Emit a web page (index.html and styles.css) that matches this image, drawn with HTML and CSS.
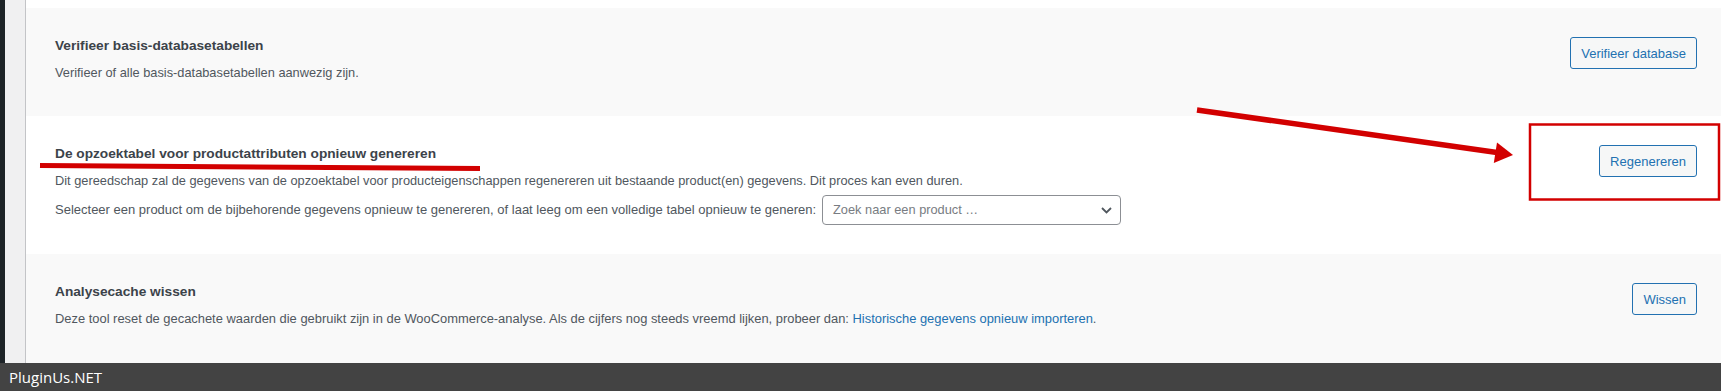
FILE: index.html
```html
<!DOCTYPE html>
<html lang="nl">
<head>
    <meta charset="UTF-8">
    <meta name="viewport" content="width=device-width, initial-scale=1.0">
    <title>Hulpmiddelen</title>
    <link rel="stylesheet" href="styles.css">
</head>
<body>
    <div class="page">
        <div class="menu-edge"></div>
        <div class="gutter"></div>

        <div class="tools-table">
            <div class="row-prev"></div>

            <!-- Verify base tables -->
            <div class="tool-row alt">
                <div class="tool-info">
                    <strong class="tool-title">Verifieer basis-databasetabellen</strong>
                    <p class="desc">Verifieer of alle basis-databasetabellen aanwezig zijn.</p>
                </div>
                <button class="button">Verifieer database</button>
            </div>

            <!-- Regenerate attributes lookup table -->
            <div class="tool-row wide">
                <div class="tool-info">
                    <strong class="tool-title">De opzoektabel voor productattributen opnieuw genereren</strong>
                    <p class="desc">Dit gereedschap zal de gegevens van de opzoektabel voor producteigenschappen regenereren uit bestaande product(en) gegevens. Dit proces kan even duren.</p>
                    <p class="desc select-line">Selecteer een product om de bijbehorende gegevens opnieuw te genereren, of laat leeg om een volledige tabel opnieuw te generen:<span class="product-select"><span class="placeholder">Zoek naar een product …</span><svg class="chevron" width="11" height="7" viewBox="0 0 11 7"><path d="M1 1l4.5 4.5L10 1" fill="none" stroke="#50575e" stroke-width="1.8"/></svg></span></p>
                </div>
                <button class="button">Regenereren</button>
            </div>

            <!-- Clear analytics cache -->
            <div class="tool-row alt last">
                <div class="tool-info">
                    <strong class="tool-title">Analysecache wissen</strong>
                    <p class="desc long">Deze tool reset de gecachete waarden die gebruikt zijn in de WooCommerce-analyse. Als de cijfers nog steeds vreemd lijken, probeer dan: <a href="#">Historische gegevens opnieuw importeren</a>.</p>
                </div>
                <button class="button">Wissen</button>
            </div>
        </div>
    </div>

    <div class="footer-bar">PluginUs.NET</div>

    <!-- hand drawn annotations over the screenshot -->
    <svg class="annotations" width="1721" height="391" viewBox="0 0 1721 391">
        <path d="M40 165.5 L480 168.5" stroke="#d20000" stroke-width="5" fill="none"/>
        <path d="M1197 110 L1497 152.5" stroke="#d20000" stroke-width="5.5" fill="none"/>
        <polygon points="1513,155 1493.8,163 1497,142.6" fill="#d20000"/>
        <rect x="1530" y="124.5" width="189" height="75" fill="none" stroke="#d20000" stroke-width="2.5"/>
    </svg>
</body>
</html>
```

FILE: styles.css
```css
body {
    margin: 0;
    width: 1721px;
    height: 391px;
    overflow: hidden;
    position: relative;
    font-family: "Liberation Sans", Arial, sans-serif;
    background-color: #f0f0f1;
}

.page {
    display: flex;
    height: 363px;
}

.menu-edge {
    width: 5px;
    background-color: #1d2327;
}

.gutter {
    width: 20px;
    background-color: #f0f0f1;
}

.tools-table {
    flex: 1;
    display: flex;
    flex-direction: column;
    border-left: 1px solid #c3c4c7;
    background-color: #fff;
}

.row-prev {
    height: 8px;
    background-color: #fff;
}

.tool-row {
    display: flex;
    justify-content: space-between;
    align-items: flex-start;
    padding: 28px 24px 34px 29px;
    background-color: #fff;
}

.tool-row.alt {
    background-color: #f9f9f9;
}

.tool-row.wide {
    padding-bottom: 29px;
}

.tool-row.last {
    flex: 1;
}

.tool-title {
    display: block;
    font-size: 13.7px;
    line-height: 20px;
    font-weight: bold;
    color: #3c434a;
}

.desc {
    margin: 8px 0 0;
    font-size: 12.8px;
    line-height: 18px;
    color: #50575e;
}

.desc.long {
    font-size: 12.92px;
}

.desc a {
    color: #2271b1;
    text-decoration: none;
}

.select-line {
    margin-top: 0;
    font-size: 13px;
}

.product-select {
    display: inline-flex;
    align-items: center;
    justify-content: space-between;
    vertical-align: baseline;
    box-sizing: border-box;
    width: 299px;
    height: 30px;
    margin: 5px 0 0 6px;
    padding: 0 8px 0 10px;
    border: 1px solid #8c8f94;
    border-radius: 4px;
    background-color: #fff;
}

.placeholder {
    color: #787c82;
    font-size: 12.8px;
}

.button {
    margin-top: 1px;
    height: 32px;
    padding: 0 10px;
    font-family: "Liberation Sans", Arial, sans-serif;
    font-size: 13px;
    color: #2271b1;
    background-color: #f6f7f7;
    border: 1px solid #2271b1;
    border-radius: 3px;
    cursor: pointer;
}

.footer-bar {
    height: 28px;
    line-height: 28px;
    padding-left: 9px;
    background-color: #434343;
    color: #fff;
    font-family: "Open Sans", sans-serif;
    font-size: 15px;
}

.annotations {
    position: absolute;
    left: 0;
    top: 0;
    pointer-events: none;
}
```
